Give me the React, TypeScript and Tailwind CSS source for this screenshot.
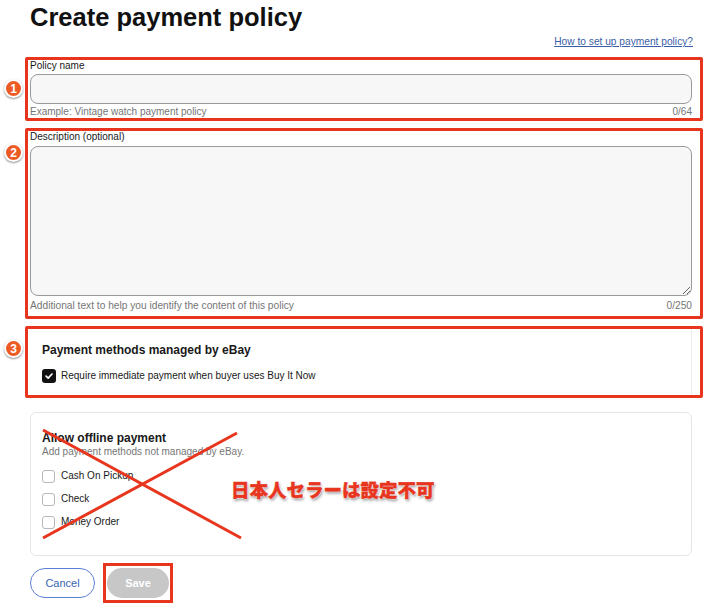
import * as React from 'react';

// Circled annotation number shown to the left of each red box
const Marker: React.FC<{ n: string; top: string }> = ({ n, top }) => (
  <div
    className={`absolute left-[-24px] ${top} w-[19px] h-[19px] rounded-full bg-[#ee5a24] border-[2px] border-white shadow-[0_1px_2px_rgba(0,0,0,0.45)] flex items-center justify-center text-white text-[12px] font-bold leading-none`}
  >
    {n}
  </div>
);

const EmptyBox: React.FC<{ label: string }> = ({ label }) => (
  <div className="flex items-center h-[14px]">
    <span className="w-[13px] h-[13px] rounded-[3px] border border-[#b8b8b8] bg-white" />
    <span className="ml-[6px] text-[10px] leading-[14px] text-[#191919]">{label}</span>
  </div>
);

const App: React.FC = () => {
  return (
    <div className="w-[713px] h-[604px] relative bg-white overflow-hidden font-['Liberation_Sans',Arial,sans-serif] text-[#191919]">
      <div className="pl-[25px] pr-[10px]">
        <h1 className="ml-[5px] pt-[2px] text-[25.5px] leading-[30px] font-bold text-[#111]">
          Create payment policy
        </h1>

        <div className="flex justify-end mt-[3px] mr-[10px]">
          <a className="text-[10.2px] leading-[14px] text-[#3a5ea8] underline">
            How to set up payment policy?
          </a>
        </div>

        {/* 1: policy name */}
        <div className="relative mt-[8px] border-[3px] border-[#e8361e] rounded-[2px] pl-[2px] pr-[8px]">
          <Marker n="1" top="top-[19px]" />
          <div className="text-[10px] leading-[12px]">Policy name</div>
          <input
            type="text"
            className="mt-[2px] block w-full h-[30px] rounded-[8px] border border-[#9a9a9a] bg-[#f7f7f7] outline-none"
          />
          <div className="mt-[2px] flex justify-between text-[10px] leading-[12px] text-[#767676]">
            <span>Example: Vintage watch payment policy</span>
            <span>0/64</span>
          </div>
        </div>

        {/* 2: description */}
        <div className="relative mt-[7px] border-[3px] border-[#e8361e] rounded-[2px] pl-[2px] pr-[8px] pb-[4px]">
          <Marker n="2" top="top-[12px]" />
          <div className="text-[10px] leading-[12px]">Description (optional)</div>
          <textarea className="mt-[3px] block w-full h-[150px] rounded-[8px] border border-[#9a9a9a] bg-[#f7f7f7] outline-none" />
          <div className="mt-[4px] flex justify-between text-[10.2px] leading-[12px] text-[#767676]">
            <span>Additional text to help you identify the content of this policy</span>
            <span>0/250</span>
          </div>
        </div>

        {/* 3: managed payment methods */}
        <div className="relative mt-[7px] border-[3px] border-[#e8361e] rounded-[2px] pl-[2px] pr-[8px]">
          <Marker n="3" top="top-[10px]" />
          <div className="border-r border-[#ececec] pl-[12px] pt-[13px] pb-[12px]">
            <div className="text-[12px] leading-[16px] font-bold">Payment methods managed by eBay</div>
            <div className="mt-[11px] flex items-center h-[14px]">
              <span className="w-[14px] h-[14px] rounded-[3px] bg-[#111] flex items-center justify-center">
                <svg viewBox="0 0 12 12" className="w-[10px] h-[10px]" fill="none" stroke="white" strokeWidth="2" strokeLinecap="round" strokeLinejoin="round">
                  <path d="M2.5 6.2 5 8.6 9.6 3.6" />
                </svg>
              </span>
              <span className="ml-[5px] text-[10px] leading-[14px]">
                Require immediate payment when buyer uses Buy It Now
              </span>
            </div>
          </div>
        </div>

        {/* offline payment (not available) */}
        <div className="relative mt-[14px] ml-[5px] mr-[11px] border border-[#e6e6e6] rounded-[6px] pl-[11px] pt-[17px] pb-[26px]">
          <div className="text-[12px] leading-[16px] font-bold">Allow offline payment</div>
          <div className="text-[10px] leading-[12px] text-[#767676]">Add payment methods not managed by eBay.</div>
          <div className="mt-[11px] flex flex-col gap-[9px]">
            <EmptyBox label="Cash On Pickup" />
            <EmptyBox label="Check" />
            <EmptyBox label="Money Order" />
          </div>

          <svg className="absolute left-0 top-0 w-[300px] h-[140px] pointer-events-none" viewBox="0 0 300 140">
            <line x1="12" y1="17" x2="210" y2="125" stroke="#e8361e" strokeWidth="3" />
            <line x1="206" y1="20" x2="12" y2="125" stroke="#e8361e" strokeWidth="3" />
          </svg>

          <div className="absolute left-[200px] top-[63px] text-[18.5px] leading-[26px] font-black text-[#e8361e] font-['Noto_Sans_CJK_JP',sans-serif] [-webkit-text-stroke:0.4px_#e8361e] [text-shadow:0_0_2px_#fff,0_0_2px_#fff,1px_2px_3px_rgba(0,0,0,0.45)]">
            日本人セラーは設定不可
          </div>
        </div>

        {/* actions */}
        <div className="mt-[7px] ml-[5px] flex items-center gap-[8px]">
          <button className="w-[65px] h-[30px] rounded-full border border-[#5b7fd6] text-[#3665b3] text-[11px] bg-white">
            Cancel
          </button>
          <div className="border-[3px] border-[#e8361e] px-[1px] py-[2px]">
            <button className="w-[62px] h-[30px] rounded-full bg-[#c7c7c7] text-white text-[11px] font-bold">
              Save
            </button>
          </div>
        </div>
      </div>
    </div>
  );
};

export default App;
